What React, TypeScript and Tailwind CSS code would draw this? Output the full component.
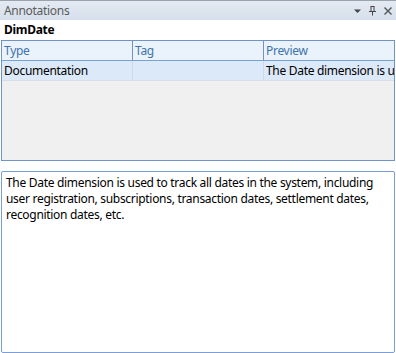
export default function App() {
  const font = { fontFamily: '"Segoe UI", "Noto Sans", sans-serif' };
  return (
    <div className="w-[396px] h-[353px] bg-white flex flex-col text-[12px] tracking-[-0.3px] text-black overflow-hidden" style={font}>
      {/* title bar */}
      <div className="h-[20px] border-t border-[#9aa3ad] bg-gradient-to-b from-[#e4eaf2] to-[#d5dfeb] flex items-center pl-[4px] pr-[3px]">
        <span className="text-[#5b5b5b] text-[12px] leading-none">Annotations</span>
        <div className="ml-auto flex items-center gap-[6px] text-[#444]">
          <svg width="9" height="9" viewBox="0 0 9 9"><path d="M1 3.5h7L4.5 7z" fill="#444" /></svg>
          <svg width="9" height="11" viewBox="0 0 9 11"><path d="M2.5 1.5h4M3 1.5v5M6 1.5v5M1 6.5h7M4.5 6.5v4" stroke="#444" fill="none" /></svg>
          <svg width="10" height="10" viewBox="0 0 10 10"><path d="M1.5 1.5l7 7M8.5 1.5l-7 7" stroke="#555" strokeWidth="1.4" /></svg>
        </div>
      </div>
      <div className="h-[20px] flex items-center pl-[4px] font-bold">DimDate</div>
      {/* grid */}
      <div className="mx-[1px] h-[121px] border border-[#6f93c6] bg-[#f0f0f0] flex flex-col">
        <div className="h-[20px] bg-[#eaf2fb] border-b border-[#7aa2cf] grid grid-cols-[131px_131px_1fr] text-[#3e73ad]">
          <div className="pl-[2px] pt-[1px] border-r border-[#6f93c6] flex items-center">Type</div>
          <div className="pl-[2px] pt-[1px] border-r border-[#6f93c6] flex items-center">Tag</div>
          <div className="pl-[2px] pt-[1px] flex items-center">Preview</div>
        </div>
        <div className="h-[20px] bg-[#dce9f8] border-b border-[#d8dde6] grid grid-cols-[131px_131px_1fr]">
          <div className="pl-[2px] border-r border-[#d2d8e4] flex items-center">Documentation</div>
          <div className="border-r border-[#d2d8e4]"></div>
          <div className="pl-[2px] flex items-center overflow-hidden whitespace-nowrap">The Date dimension is used</div>
        </div>
      </div>
      {/* description box */}
      <div className="mt-[10px] mx-[1px] flex-1 border border-[#7b9fd4] rounded-[2px] px-[4px] pt-[3px] leading-[16px]">
        The Date dimension is used to track all dates in the system, including user registration, subscriptions, transaction dates, settlement dates, recognition dates, etc.
      </div>
    </div>
  );
}
